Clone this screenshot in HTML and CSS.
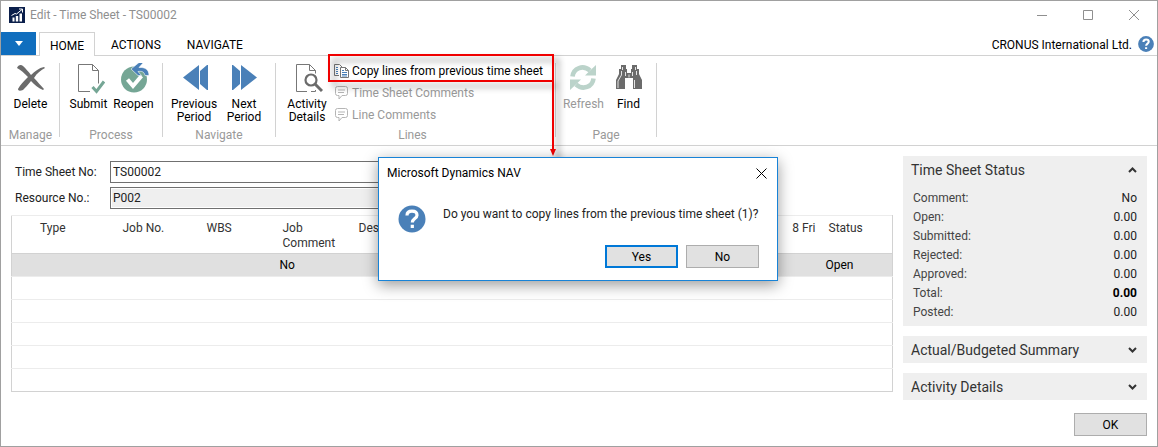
FILE: index.html
```html
<!DOCTYPE html>
<html lang="en">
<head>
<meta charset="utf-8">
<meta name="viewport" content="width=device-width, initial-scale=1">
<title>Edit - Time Sheet - TS00002</title>
<link rel="stylesheet" href="styles.css">
</head>
<body>
<div class="window">
  <header class="titlebar">
    <svg class="app-icon" width="16" height="16" viewBox="0 0 16 16" aria-hidden="true">
      <rect width="16" height="16" fill="#0b1f4b"/>
      <path d="M3.500 10.500h2v4h-2zM6.800 9h2.400v5.500h-2.400zM10.500 6.500h2.500v8h-2.500z" fill="#fff"/>
      <path d="M2.500 8.500 6 6.500l1.500.500L13 2.500M10 2h3.500v3.500" fill="none" stroke="#fff"/>
    </svg>
    <h1 class="title">Edit - Time Sheet - TS00002</h1>
    <div class="window-controls">
      <button class="window-button" aria-label="Minimize"><svg width="10" height="10" viewBox="0 0 10 10"><path d="M0 5.500h10"/></svg></button>
      <button class="window-button" aria-label="Maximize"><svg width="10" height="10" viewBox="0 0 10 10"><path d="M.5.5h9v9h-9z"/></svg></button>
      <button class="window-button" aria-label="Close"><svg width="10" height="10" viewBox="0 0 10 10"><path d="m0 0 10 10M10 0 0 10"/></svg></button>
    </div>
  </header>

  <nav class="tabs">
    <button class="file-menu" aria-label="Application menu"><svg width="8" height="5" viewBox="0 0 8 5"><path d="M0 0h8L4 5z" fill="#fff"/></svg></button>
    <button class="tab tab-active">HOME</button>
    <button class="tab">ACTIONS</button>
    <button class="tab">NAVIGATE</button>
    <span class="company">CRONUS International Ltd.</span>
    <button class="help" aria-label="Help">
      <svg width="16" height="16" viewBox="0 0 28 28"><circle cx="14" cy="14" r="13.800" fill="#4a80b8"/><path d="M9.500 10.500c0-3 2-4.500 4.700-4.500s4.600 1.600 4.600 4c0 3.200-4.600 3.400-4.600 7M14.200 19.500v3.300" fill="none" stroke="#fff" stroke-width="3.600"/></svg>
    </button>
  </nav>

  <section class="ribbon">
    <div class="group">
      <div class="group-items">
        <button class="command">
          <svg width="32" height="32" viewBox="0 0 32 32"><path d="M2 5C3 2 6 1 8 3c3 3 5 5 8 9 4-4 8-7 13-8l1 1c-4 2-8 5-11 10 4 4 7 8 10 11l-1 1c-5-2-9-6-12-9-3 4-6 7-8 9-3 1-5 1-5-1 2-4 6-8 10-12C9 10 6 7 2 5Z" fill="#6b6b6b"/></svg>
          <span>Delete</span>
        </button>
      </div>
      <span class="group-name">Manage</span>
    </div>
    <div class="group">
      <div class="group-items">
        <button class="command">
          <svg width="32" height="32" viewBox="0 0 32 32"><path d="M17 28.500H5.500v-27h14l6 6v13M19.500 1.500v6h6" fill="none" stroke="#777"/><path d="m19.500 24 4 4.500L31 18.500" fill="none" stroke="#75a695" stroke-width="3"/></svg>
          <span>Submit</span>
        </button>
        <button class="command">
          <svg width="32" height="32" viewBox="0 0 32 32"><circle cx="16" cy="16.500" r="13" fill="#75a695"/><path d="m9.500 16.500 5.500 6.500 8.500-10" fill="none" stroke="#fff" stroke-width="4"/><path d="m13 6 8-6.500h4.500L21 4.500c6-.5 10 2 10 8h-4c-1-4-3-4.500-7-4l3.500 4H20z" fill="#4a80b8" stroke="#fff" stroke-width=".6"/></svg>
          <span>Reopen</span>
        </button>
      </div>
      <span class="group-name">Process</span>
    </div>
    <div class="group">
      <div class="group-items">
        <button class="command command-wide">
          <svg width="32" height="32" viewBox="0 0 32 32"><path d="M21 2v25L5 14.500zM30 2v25h-1l-7-6V8l7-6z" fill="#4a80b8"/></svg>
          <span>Previous Period</span>
        </button>
        <button class="command command-wide">
          <svg width="32" height="32" viewBox="0 0 32 32"><path d="M13 2v25l16-12.500zM4 2v25h1l7-6V8L5 2z" fill="#4a80b8"/></svg>
          <span>Next<br>Period</span>
        </button>
      </div>
      <span class="group-name">Navigate</span>
    </div>
    <div class="group group-lines">
      <div class="group-items">
        <button class="command command-wide">
          <svg width="32" height="32" viewBox="0 0 32 32"><path d="M16 28.500H5.500v-27h13l6 6v3M18.500 1.500v6h6M20 28.500h4.500V27" fill="none" stroke="#777"/><circle cx="20" cy="17" r="5.500" fill="#fff" stroke="#6b6b6b" stroke-width="2.200"/><path d="m24 21 7 7" stroke="#6b6b6b" stroke-width="3"/></svg>
          <span>Activity Details</span>
        </button>
        <div class="small-commands">
          <button class="small-command">
            <svg width="16" height="16" viewBox="0 0 16 16" fill="none"><path d="M5 12.500H.500v-11h5l3 3" stroke="#777"/><path d="M2 4.500h2m-2 2h2m-2 2h2m-2 2h2" stroke="#4a80b8"/><path d="M6.500 4.500h5l3 3v7h-8zM11.500 4.500v3h3" stroke="#777" fill="#fff"/><path d="M8 7.500h2m-2 2h5m-5 2h5m-5 1.500h5" stroke="#4a80b8"/></svg>
            <span>Copy lines from previous time sheet</span>
          </button>
          <button class="small-command" disabled>
            <svg width="16" height="16" viewBox="0 0 16 16"><path d="M3.500 1.500h8q2 0 2 2v5q0 2-2 2H8l-3 3.500v-3.500H3.500q-2 0-2-2v-5q0-2 2-2ZM4 5h7M4 7.500h6" fill="none" stroke="#b5b5b5"/></svg>
            <span>Time Sheet Comments</span>
          </button>
          <button class="small-command" disabled>
            <svg width="16" height="16" viewBox="0 0 16 16"><path d="M3.500 1.500h8q2 0 2 2v5q0 2-2 2H8l-3 3.500v-3.500H3.500q-2 0-2-2v-5q0-2 2-2ZM4 5h7M4 7.500h6" fill="none" stroke="#b5b5b5"/></svg>
            <span>Line Comments</span>
          </button>
        </div>
      </div>
      <span class="group-name">Lines</span>
    </div>
    <div class="group group-page">
      <div class="group-items">
        <button class="command" disabled>
          <svg width="32" height="32" viewBox="0 0 32 32"><path d="M5.500 13.500C6.500 5 16 1.500 23 7.500M26.500 15.500C25.500 24 16 27.500 9 21.500" fill="none" stroke="#bbd3ca" stroke-width="4.600"/><path d="M29 2v10.500H18l4-4zM3 27V16.500h11l-4 4z" fill="#bbd3ca"/></svg>
          <span>Refresh</span>
        </button>
        <button class="command">
          <svg width="32" height="32" viewBox="0 0 32 32"><path d="M9 2h5v4h1v4h4V6h1V2h5v4h2v5l3 6v9h-9V15h-8v11H4v-9l3-6V6h2z" fill="#6b6b6b"/><path d="M10.500 4v3M23.500 4v3M9.500 8v4L6 18v7M13.500 9v4M20.500 9v4M17 11.500v3M24.500 8v4M22.500 17v8" fill="none" stroke="#e4e4e4"/></svg>
          <span>Find</span>
        </button>
      </div>
      <span class="group-name">Page</span>
    </div>
  </section>

  <main class="content">
    <section class="document">
      <form class="fields">
        <label for="sheet-no">Time Sheet No:</label>
        <input id="sheet-no" type="text" value="TS00002">
        <label for="resource-no">Resource No.:</label>
        <input id="resource-no" type="text" value="P002" readonly>
      </form>
      <table class="lines">
        <colgroup><col class="col-type"><col class="col-job"><col class="col-wbs"><col class="col-comment"><col><col class="col-day"><col class="col-status"></colgroup>
        <thead>
          <tr><th class="first">Type</th><th>Job No.</th><th>WBS</th><th>Job<br>Comment</th><th>Description</th><th class="day">8 Fri</th><th>Status</th></tr>
        </thead>
        <tbody>
          <tr class="selected"><td></td><td></td><td></td><td>No</td><td></td><td></td><td>Open</td></tr>
          <tr><td></td><td></td><td></td><td></td><td></td><td></td><td></td></tr>
          <tr><td></td><td></td><td></td><td></td><td></td><td></td><td></td></tr>
          <tr><td></td><td></td><td></td><td></td><td></td><td></td><td></td></tr>
          <tr><td></td><td></td><td></td><td></td><td></td><td></td><td></td></tr>
          <tr><td></td><td></td><td></td><td></td><td></td><td></td><td></td></tr>
        </tbody>
      </table>
    </section>

    <aside class="factboxes">
      <section class="factbox">
        <button class="factbox-title" aria-expanded="true">Time Sheet Status
          <svg width="9" height="6" viewBox="0 0 9 6"><path d="m1 5 3.500-3.500L8 5"/></svg></button>
        <dl class="facts">
          <dt>Comment:</dt><dd>No</dd>
          <dt>Open:</dt><dd>0.00</dd>
          <dt>Submitted:</dt><dd>0.00</dd>
          <dt>Rejected:</dt><dd>0.00</dd>
          <dt>Approved:</dt><dd>0.00</dd>
          <dt>Total:</dt><dd class="total">0.00</dd>
          <dt>Posted:</dt><dd>0.00</dd>
        </dl>
      </section>
      <section class="factbox">
        <button class="factbox-title" aria-expanded="false">Actual/Budgeted Summary
          <svg width="9" height="6" viewBox="0 0 9 6"><path d="m1 1 3.500 3.500L8 1"/></svg></button>
      </section>
      <section class="factbox">
        <button class="factbox-title" aria-expanded="false">Activity Details
          <svg width="9" height="6" viewBox="0 0 9 6"><path d="m1 1 3.500 3.500L8 1"/></svg></button>
      </section>
    </aside>
  </main>

  <footer class="footer"><button class="push">OK</button></footer>

  <svg class="callout" width="240" height="116" viewBox="0 0 240 116" aria-hidden="true">
    <path d="M9 10h224v26H9zM233 36v68" fill="none" stroke="#f00000" stroke-width="2"/>
    <path d="M230 104h6l-3 7z" fill="#f00000"/>
  </svg>

  <div class="dialog" role="dialog" aria-labelledby="dialog-title">
    <div class="dialog-head">
      <h2 id="dialog-title" class="title">Microsoft Dynamics NAV</h2>
      <button class="dialog-close" aria-label="Close"><svg width="11" height="11" viewBox="0 0 11 11"><path d="m.5.5 10 10M10.500.5l-10 10"/></svg></button>
    </div>
    <div class="dialog-body">
      <svg width="28" height="28" viewBox="0 0 28 28" aria-hidden="true"><circle cx="14" cy="14" r="13.500" fill="#4a80b8"/><path d="M9 10.500c0-3 2-4.300 5-4.300s5 1.500 5 4c0 3.400-4.700 3.400-4.700 7.300M14.300 19.700v3.300" fill="none" stroke="#fff" stroke-width="3.200"/></svg>
      <p class="message">Do you want to copy lines from the previous time sheet (1)?</p>
    </div>
    <div class="dialog-actions">
      <button class="push push-default">Yes</button>
      <button class="push">No</button>
    </div>
  </div>
</div>
</body>
</html>
```
FILE: styles.css
```css
*, *::before, *::after { box-sizing: border-box; }

body {
  margin: 0;
  font-family: Roboto, "Noto Sans", sans-serif;
  font-size: 12px;
  line-height: 16px;
  color: #000;
  background: #fff;
}

button, input {
  font: inherit;
  color: inherit;
}

button {
  margin: 0;
  padding: 0;
  border: 0;
  background: none;
  white-space: nowrap;
}

svg { display: block; flex: none; }

.window {
  position: relative;
  display: flex;
  flex-direction: column;
  min-height: 100vh;
  border: 1px solid #a0a0a0;
}

.title {
  margin: 0;
  font-size: 12px;
  font-weight: 400;
}

.titlebar {
  display: flex;
  align-items: center;
  gap: 5px;
  height: 31px;
  padding: 0 0 3px 8px;
  color: #8f8f8f;
}

.window-controls { display: flex; margin-left: auto; }

.window-button {
  display: grid;
  place-items: center;
  width: 46px;
  height: 28px;
}

.window-button path { fill: none; stroke: #8f8f8f; }

.tabs {
  display: flex;
  align-items: stretch;
  height: 24px;
  border-bottom: 1px solid #d2d2d2;
}

.file-menu {
  display: grid;
  place-items: center;
  width: 35px;
  margin-right: 3px;
  background: #106ebe;
}

.tab { padding: 2px 13px 0; }

.tab-active {
  width: 56px;
  height: 24px;
  margin-right: 3px;
  padding: 2px 0 0;
  border: 1px solid #d2d2d2;
  border-bottom: 0;
  background: #fff;
}

.company { margin-left: auto; align-self: center; padding-top: 2px; }
.help { align-self: center; margin: 0 3px 0 6px; }

.ribbon {
  display: flex;
  height: 90px;
  padding: 7px 1px 8px;
  border-bottom: 1px solid #d2d2d2;
}

.group {
  display: flex;
  flex-direction: column;
  align-items: center;
  justify-content: space-between;
  padding: 0 6px;
  border-right: 1px solid #d2d2d2;
}

.group-lines { padding-right: 12px; }
.group-page { padding: 0 5px; }

.group-items { display: flex; align-items: flex-start; }

.group-name { margin-bottom: -4px; color: #999; line-height: 12px; }

.command {
  display: flex;
  flex-direction: column;
  align-items: center;
  gap: 3px;
  width: 45px;
  line-height: 13px;
  white-space: normal;
}

.command-wide { width: 50px; }
.command:disabled, .small-command:disabled { color: #999; }

.small-commands {
  display: flex;
  flex-direction: column;
  gap: 6px;
  padding-left: 2px;
}

.small-command {
  display: flex;
  align-items: center;
  gap: 2px;
}

.content {
  display: flex;
  gap: 10px;
  padding: 10px 10px 0;
}

.document { flex: 1; min-width: 0; }

.fields {
  display: grid;
  grid-template-columns: 95px 1fr;
  align-items: center;
  gap: 4px 0;
  margin: 0;
  padding: 5px 120px 6px 4px;
  color: #222;
}

.fields input {
  height: 22px;
  min-width: 0;
  padding: 0 2px;
  border: 1px solid #707070;
  background: #fff;
}

.fields input:read-only {
  background: #efefef;
  box-shadow: inset 0 0 0 1px #fff;
}

.lines {
  width: 100%;
  table-layout: fixed;
  border-collapse: collapse;
  border: 1px solid #d2d2d2;
  border-top-color: #ececec;
}

.lines th {
  height: 38px;
  padding: 5px 3px 0;
  font-weight: 400;
  text-align: left;
  vertical-align: top;
  line-height: 15px;
  color: #333;
}

.lines .first { padding-left: 28px; }
.lines .day { text-align: right; padding-right: 10px; }
.lines td { height: 23px; padding: 0; border-top: 1px solid #ececec; }
.lines .selected { background: #e0e0e0; }
.lines .selected td { border-top-color: #d2d2d2; }

.col-type { width: 108px; }
.col-job { width: 84px; }
.col-wbs { width: 76px; }
.col-comment { width: 76px; }
.col-day { width: 50px; }
.col-status { width: 67px; }

.factboxes {
  display: flex;
  flex-direction: column;
  gap: 10px;
  width: 244px;
}

.factbox { background: #efefef; }

.factbox-title {
  display: flex;
  align-items: center;
  justify-content: space-between;
  width: 100%;
  height: 27px;
  padding: 0 10px 0 8px;
  font-size: 14px;
  color: #333;
}

.factbox-title path { fill: none; stroke: #333; stroke-width: 2; }

.facts {
  display: grid;
  grid-template-columns: 1fr auto;
  margin: 0;
  padding: 6px 10px 4px;
  line-height: 19px;
  color: #444;
}

.facts dd { margin: 0; text-align: right; color: #222; }
.facts .total { font-weight: 700; color: #000; }

.footer {
  display: flex;
  justify-content: flex-end;
  padding: 13px 10px 10px;
}

.push {
  width: 73px;
  height: 23px;
  border: 1px solid #adadad;
  background: #e1e1e1;
}

.push-default { border: 2px solid #0078d7; }

.callout {
  position: absolute;
  top: 44px;
  left: 319px;
  filter: drop-shadow(5px 5px 3px rgba(0, 0, 0, 0.45));
}

.dialog {
  position: absolute;
  top: 156px;
  left: 377px;
  width: 400px;
  border: 1px solid #1883d7;
  background: #fff;
  box-shadow: 0 4px 14px rgba(0, 0, 0, 0.4);
}

.dialog-head {
  display: flex;
  align-items: center;
  justify-content: space-between;
  height: 30px;
  padding: 0 10px 0 8px;
}

.dialog-close path { fill: none; stroke: #000; }

.dialog-body {
  display: flex;
  gap: 17px;
  padding: 17px 19px 12px;
}

.message { margin: 0; padding-top: 1px; color: #222; white-space: nowrap; }

.dialog-actions {
  display: flex;
  justify-content: flex-end;
  gap: 8px;
  padding: 0 18px 12px;
}
```
